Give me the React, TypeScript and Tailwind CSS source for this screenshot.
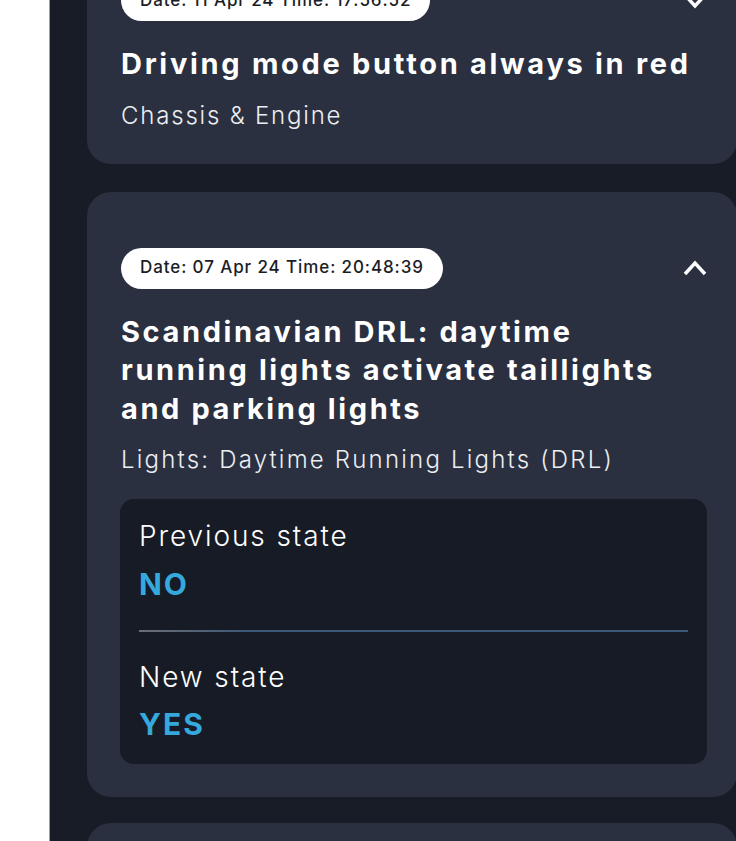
import React from "react";

function Chevron({ up }: { up: boolean }) {
  return (
    <svg width="24" height="16" viewBox="0 0 24 16" className="shrink-0">
      <polyline
        points={up ? "2,14 12,3 22,14" : "2,2 12,13 22,2"}
        fill="none"
        stroke="#ffffff"
        strokeWidth="3.5"
        strokeLinecap="butt"
        strokeLinejoin="miter"
      />
    </svg>
  );
}

function Pill({ text }: { text: string }) {
  return (
    <div className="flex h-[41px] items-center rounded-full bg-white px-[19px] text-[17px] font-medium tracking-[0.9px] text-[#1a1d26]">
      {text}
    </div>
  );
}

export default function App() {
  const font = { fontFamily: "Inter, 'Noto Sans', sans-serif" };
  return (
    <div className="flex h-[841px] w-[736px] overflow-hidden bg-white" style={font}>
      <div className="w-[49px] shrink-0 bg-white" />
      <div className="w-px shrink-0 bg-[#9a9ca2]" />
      <div className="flex-1 overflow-hidden bg-[#181c26] pl-[37px]">
        <div className="mt-[-76px] flex w-[650px] flex-col">
          {/* Card 1 */}
          <div className="rounded-[24px] bg-[#2a3040] pb-[32px] pl-[34px] pr-[30px] pt-[56px]">
            <div className="flex items-center justify-between">
              <Pill text="Date: 11 Apr 24 Time: 17:56:52" />
              <Chevron up={false} />
            </div>
            <div className="mt-[24px] whitespace-nowrap text-[29px] font-bold leading-[38.5px] tracking-[2.7px] text-white">
              Driving mode button always in red
            </div>
            <div className="mt-[16px] text-[24px] font-light leading-[32px] tracking-[1.8px] text-[#eceef2]">
              Chassis &amp; Engine
            </div>
          </div>

          {/* Card 2 */}
          <div className="mt-[28px] rounded-[24px] bg-[#2a3040] pb-[33px] pl-[33px] pr-[30px] pt-[56px]">
            <div className="flex items-center justify-between pl-px">
              <Pill text="Date: 07 Apr 24 Time: 20:48:39" />
              <Chevron up={true} />
            </div>
            <div className="mt-[24px] whitespace-nowrap pl-px text-[29px] font-bold leading-[38.5px] tracking-[2.6px] text-white">
              Scandinavian DRL: daytime
              <br />
              running lights activate taillights
              <br />
              and parking lights
            </div>
            <div className="mt-[16px] whitespace-nowrap pl-px text-[24px] font-light leading-[32px] tracking-[2.2px] text-[#eceef2]">
              Lights: Daytime Running Lights (DRL)
            </div>
            <div className="mt-[23px] rounded-[14px] bg-[#171b25] px-[19px] pb-[22px] pt-[19px]">
              <div className="text-[28px] font-light leading-[36px] tracking-[1.9px] text-white">Previous state</div>
              <div className="mt-[12px] text-[30px] font-bold leading-[36px] tracking-[2px] text-[#35a8dc]">NO</div>
              <div className="mt-[28px] h-[2px] bg-gradient-to-r from-[#6b6e74] via-[#3b5878] via-20% to-[#3b5878]" />
              <div className="mt-[27px] text-[28px] font-light leading-[36px] tracking-[1.9px] text-white">New state</div>
              <div className="mt-[11px] text-[30px] font-bold leading-[36px] tracking-[2px] text-[#35a8dc]">YES</div>
            </div>
          </div>

          {/* Card 3 */}
          <div className="mt-[26px] h-[200px] rounded-[24px] bg-[#2a3040]" />
        </div>
      </div>
    </div>
  );
}
